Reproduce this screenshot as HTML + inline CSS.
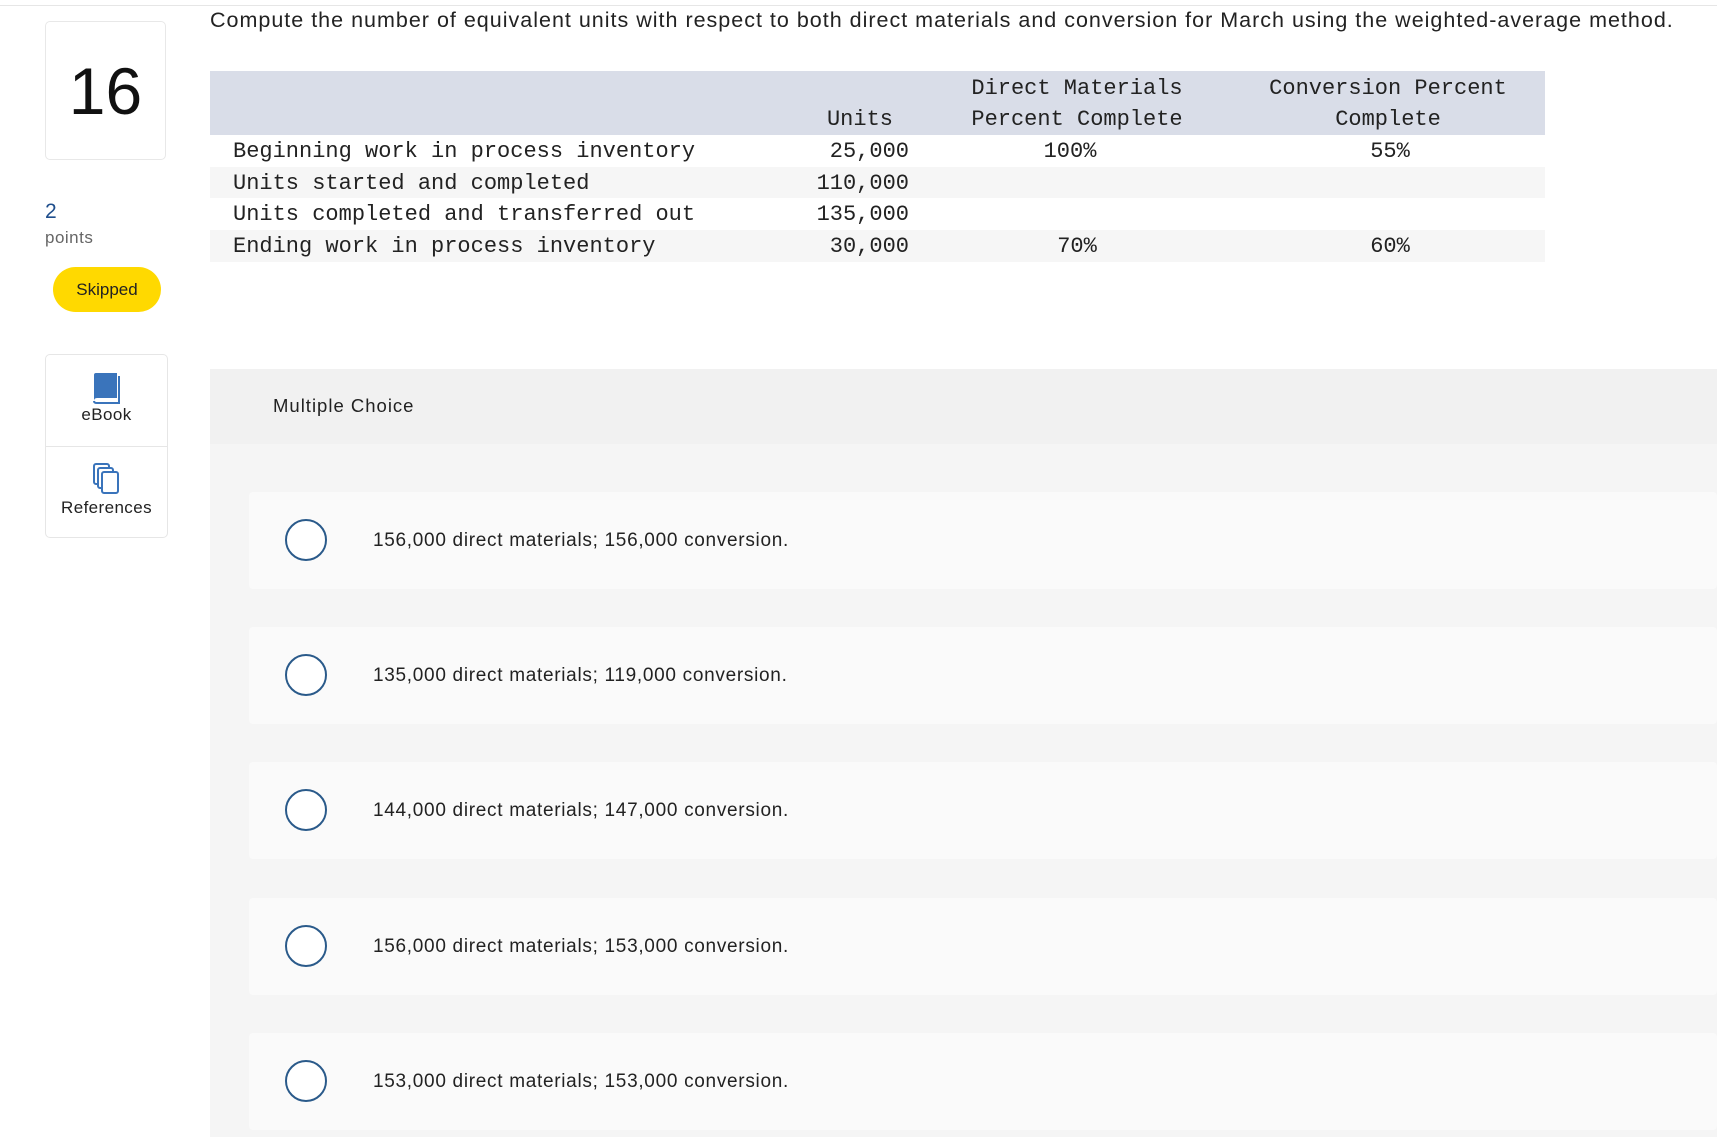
<!DOCTYPE html>
<html><head><meta charset="utf-8"><style>
body{margin:0;width:1717px;height:1146px;background:#fff;position:relative;overflow:hidden;font-family:"Liberation Sans",sans-serif;color:#222}
.a{position:absolute}
.mono{font-family:"Liberation Mono",monospace;font-size:22px;color:#222;white-space:pre}
.opt{position:absolute;left:249px;right:0;height:97px;background:#fafafa;border-radius:4px}
.opt .c{position:absolute;left:36px;top:27px;width:42px;height:42px;border:2px solid #2a5a8a;border-radius:50%;background:#fff;box-sizing:border-box}
.opt .t{position:absolute;left:124px;top:0;line-height:97px;font-size:19px;letter-spacing:.7px;color:#222}
</style></head><body>
<div class="a" style="left:0;right:0;top:5px;height:1px;background:#e6e6e6"></div>
<div class="a" style="left:45px;top:21px;width:121px;height:139px;border:1px solid #e8e8e8;border-radius:5px;box-sizing:border-box;text-align:center;font-size:66px;line-height:139px;color:#111">16</div>
<div class="a" style="left:45px;top:200px;font-size:21px;color:#1f4e8c">2</div>
<div class="a" style="left:45px;top:228px;font-size:17px;letter-spacing:.5px;color:#666">points</div>
<div class="a" style="left:53px;top:267px;width:108px;height:45px;border-radius:23px;background:#ffd900;text-align:center;line-height:45px;font-size:17px;color:#222">Skipped</div>
<div class="a" style="left:45px;top:354px;width:123px;height:184px;border:1px solid #e6e6e6;border-radius:5px;box-sizing:border-box"></div>
<div class="a" style="left:46px;top:446px;width:121px;height:1px;background:#e6e6e6"></div>
<svg class="a" style="left:93px;top:372px" width="28" height="32" viewBox="0 0 28 32"><path d="M1 3 Q1 1 3 1 H24 V26 H4 Q1 26 1 29 Z" fill="#3a74bb"/><path d="M1 29 Q1 31 4 31 H26 V4" fill="none" stroke="#3a74bb" stroke-width="2"/><path d="M4 28 H24" stroke="#fff" stroke-width="1.5"/></svg>
<div class="a" style="left:45px;top:405px;width:123px;text-align:center;font-size:17px;letter-spacing:.4px">eBook</div>
<svg class="a" style="left:93px;top:463px" width="28" height="32" viewBox="0 0 28 32"><rect x="1" y="1" width="15" height="20" rx="2" fill="#fff" stroke="#3a74bb" stroke-width="2"/><rect x="5" y="5" width="15" height="20" rx="2" fill="#fff" stroke="#3a74bb" stroke-width="2"/><rect x="9" y="9" width="16" height="21" rx="2" fill="#fff" stroke="#3a74bb" stroke-width="2"/></svg>
<div class="a" style="left:45px;top:498px;width:123px;text-align:center;font-size:17px;letter-spacing:.4px">References</div>

<div class="a" style="left:210px;top:8px;font-size:21.5px;letter-spacing:1px;color:#222;white-space:nowrap">Compute the number of equivalent units with respect to both direct materials and conversion for March using the weighted-average method.</div>

<div class="a" style="left:210px;top:71px;width:1335px;height:64px;background:#d9dde8"></div>
<div class="a" style="left:210px;top:167px;width:1335px;height:31px;background:#f6f6f6"></div>
<div class="a" style="left:210px;top:230px;width:1335px;height:32px;background:#f6f6f6"></div>
<div class="a mono" style="left:950px;top:73px;width:254px;text-align:center;line-height:31px">Direct Materials
Percent Complete</div>
<div class="a mono" style="left:1240px;top:73px;width:296px;text-align:center;line-height:31px">Conversion Percent
Complete</div>
<div class="a mono" style="left:800px;top:104px;width:93px;text-align:right;line-height:31px">Units</div>
<div class="a mono" style="left:233px;top:136px;line-height:31.7px">Beginning work in process inventory
Units started and completed
Units completed and transferred out
Ending work in process inventory</div>
<div class="a mono" style="left:760px;top:136px;width:149px;text-align:right;line-height:31.7px">25,000
110,000
135,000
30,000</div>
<div class="a mono" style="left:1020px;top:136px;width:100px;text-align:center;line-height:31.7px">100%</div>
<div class="a mono" style="left:1027px;top:231px;width:100px;text-align:center;line-height:31.7px">70%</div>
<div class="a mono" style="left:1340px;top:136px;width:100px;text-align:center;line-height:31.7px">55%</div>
<div class="a mono" style="left:1340px;top:231px;width:100px;text-align:center;line-height:31.7px">60%</div>

<div class="a" style="left:210px;right:0;top:369px;height:768px;background:#f5f5f5"></div>
<div class="a" style="left:210px;right:0;top:369px;height:75px;background:#f1f1f1"></div>
<div class="a" style="left:273px;top:395px;font-size:18.5px;letter-spacing:1px;color:#222">Multiple Choice</div>

<div class="opt" style="top:492px"><div class="c"></div><div class="t">156,000 direct materials; 156,000 conversion.</div></div>
<div class="opt" style="top:627px"><div class="c"></div><div class="t">135,000 direct materials; 119,000 conversion.</div></div>
<div class="opt" style="top:762px"><div class="c"></div><div class="t">144,000 direct materials; 147,000 conversion.</div></div>
<div class="opt" style="top:898px"><div class="c"></div><div class="t">156,000 direct materials; 153,000 conversion.</div></div>
<div class="opt" style="top:1033px"><div class="c"></div><div class="t">153,000 direct materials; 153,000 conversion.</div></div>
</body></html>
